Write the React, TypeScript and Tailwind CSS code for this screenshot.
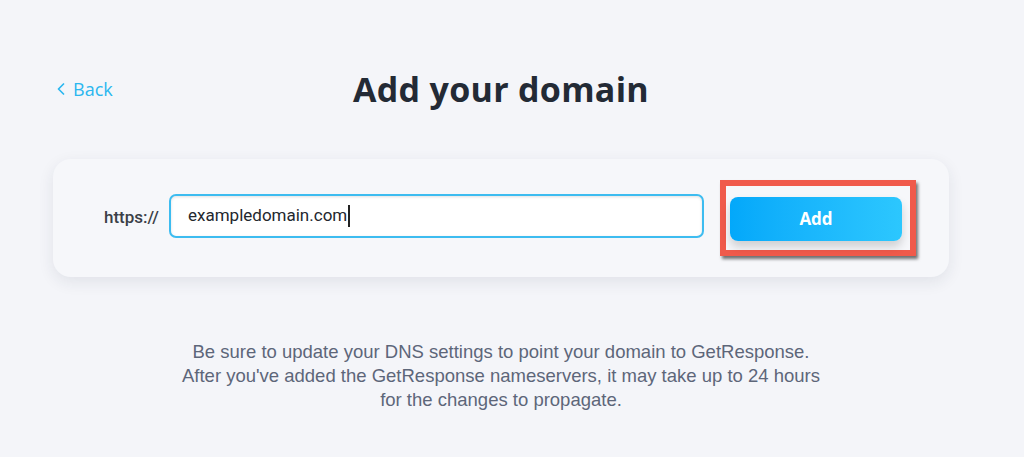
import React from 'react';

const ChevronLeft = () => (
  <svg width="8" height="12" viewBox="0 0 8 12" fill="none" className="shrink-0">
    <path d="M6.5 1 L1.5 6 L6.5 11" stroke="#2bb7ef" strokeWidth="1.7" strokeLinecap="round" strokeLinejoin="round" />
  </svg>
);

export default function App() {
  return (
    <div className="min-h-screen bg-[#f4f5f9] overflow-hidden">
      <div className="ml-[53px] w-[896px] pt-[67px]">
        {/* Header */}
        <div className="grid grid-cols-[1fr_auto_1fr] items-center h-[44px]">
          <a
            href="#"
            className="justify-self-start ml-[4px] flex items-center gap-[8px] text-[18px] leading-[24px] text-[#2bb7ef] font-['Open_Sans',sans-serif]"
          >
            <ChevronLeft />
            <span>Back</span>
          </a>
          <h1 className="text-[34px] leading-[44px] font-bold text-[#232a35] tracking-[0.3px] font-['Open_Sans',sans-serif]">
            Add your domain
          </h1>
          <div />
        </div>

        {/* Domain card */}
        <div className="mt-[48px] h-[118px] rounded-[18px] bg-[#f6f7fa] shadow-[0_5px_16px_rgba(30,40,70,0.09)] flex items-center pl-[51px] pr-[33px]">
          <span className="w-[65px] shrink-0 text-[17px] font-medium text-[#3b3f47] font-['Roboto',sans-serif]">
            https://
          </span>
          <div className="w-[535px] h-[44px] mt-[-5px] shrink-0 rounded-[7px] border-2 border-[#3dbcf0] bg-white shadow-[inset_0_1px_3px_rgba(0,0,0,0.12)] flex items-center pl-[17px]">
            <span className="text-[17px] text-[#23272e] font-['Roboto',sans-serif]">exampledomain.com</span>
            <span className="ml-[1px] w-[1.5px] h-[22px] bg-[#222]" />
          </div>
          <div className="ml-[16px] w-[196px] border-[6px] border-[#f05a4b] shadow-[2px_3px_3px_rgba(0,0,0,0.55)] pl-[4px] pr-[8px] pt-[11px] pb-[9px]">
            <button className="w-[172px] h-[44px] rounded-[8px] bg-gradient-to-r from-[#03a8fa] to-[#2cc7fe] text-white text-[17px] font-bold font-['Open_Sans',sans-serif] shadow-[0_6px_10px_rgba(0,0,0,0.16)]">
              Add
            </button>
          </div>
        </div>

        {/* Note */}
        <p className="mt-[63px] text-center text-[18.5px] leading-[24px] text-[#5d6679] font-['Liberation_Sans',Arial,sans-serif]">
          Be sure to update your DNS settings to point your domain to GetResponse.
          <br />
          After you've added the GetResponse nameservers, it may take up to 24 hours
          <br />
          for the changes to propagate.
        </p>
      </div>
    </div>
  );
}
